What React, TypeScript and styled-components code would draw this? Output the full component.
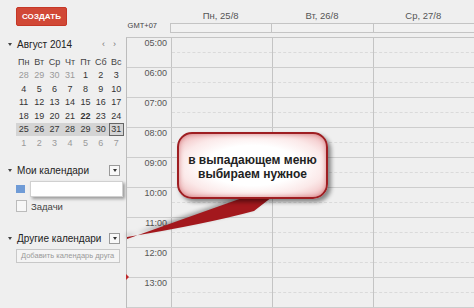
import React from "react"
import styled, { createGlobalStyle } from "styled-components"

const GlobalStyle = createGlobalStyle`
    html, body {
        margin: 0;
        padding: 0;
        background: #efefef;
    }
    body {
        font-family: "Liberation Sans", Arial, sans-serif;
        color: #333;
    }
`

const Page = styled.div`
    position: relative;
    display: flex;
    width: 474px;
    height: 308px;
    overflow: hidden;
    background: #efefef;
`

const Sidebar = styled.aside`
    flex: none;
    width: 126px;
    padding-top: 7px;
    box-sizing: border-box;
    display: flex;
    flex-direction: column;
`

const CreateButton = styled.button`
    margin-left: 16px;
    width: 51px;
    height: 19px;
    padding: 0;
    border: 1px solid #c53727;
    border-radius: 2px;
    background: #d14836;
    color: #fff;
    font-family: "Liberation Sans", Arial, sans-serif;
    font-weight: 700;
    font-size: 8px;
    letter-spacing: 0.1px;
`

const SectionHeader = styled.div<{ $mt: number }>`
    display: flex;
    align-items: center;
    height: 14px;
    margin-top: ${({ $mt }) => $mt}px;
    padding: 0 6px 0 6px;
    font-size: 10px;
    color: #222;
`

const Caret = styled.span`
    width: 0;
    height: 0;
    margin: 0 5px 0 2px;
    border-left: 2.5px solid transparent;
    border-right: 2.5px solid transparent;
    border-top: 3px solid #444;
`

const NavArrows = styled.span`
    margin-left: auto;
    margin-right: 4px;
    display: flex;
    gap: 8px;
    font-size: 9px;
    color: #777;
`

const MenuToggle = styled.span`
    margin-left: auto;
    width: 9px;
    height: 9px;
    border: 1px solid #9a9a9a;
    background: #f8f8f8;
    display: flex;
    align-items: center;
    justify-content: center;
    &::after {
        content: "";
        border-left: 2.5px solid transparent;
        border-right: 2.5px solid transparent;
        border-top: 3px solid #333;
    }
`

const MiniGrid = styled.div`
    margin: 4px 0 0 16px;
    width: 108px;
    display: grid;
    grid-template-columns: repeat(7, 1fr);
    grid-auto-rows: 13.5px;
    font-size: 9px;
`

const DayCell = styled.span<{ $muted?: boolean; $band?: boolean; $bold?: boolean; $boxed?: boolean }>`
    display: flex;
    align-items: center;
    justify-content: center;
    color: ${({ $muted }) => ($muted ? "#9a9a9a" : "#333")};
    font-weight: ${({ $bold }) => ($bold ? 700 : 400)};
    background: ${({ $band }) => ($band ? "#d4d4d4" : "transparent")};
    box-sizing: border-box;
    border: ${({ $boxed }) => ($boxed ? "1px solid #666" : "none")};
`

const WeekdayCell = styled(DayCell)`
    color: #444;
`

const CalendarRow = styled.div<{ $mt: number; $h: number }>`
    position: relative;
    display: flex;
    align-items: center;
    height: ${({ $h }) => $h}px;
    margin-top: ${({ $mt }) => $mt}px;
    padding-left: 16px;
    font-size: 9.5px;
    color: #444;
`

const ColorSwatch = styled.span`
    width: 9px;
    height: 8px;
    background: #6f9bd6;
`

const CheckBox = styled.span`
    width: 9px;
    height: 10px;
    margin-right: 4px;
    border: 1px solid #bbb;
    background: #f7f7f7;
`

const PopupMenu = styled.div`
    position: absolute;
    left: 30px;
    top: 0;
    width: 93px;
    height: 16px;
    box-sizing: border-box;
    background: #fff;
    border: 1px solid #d0d0d0;
    box-shadow: 2px 2px 3px rgba(0, 0, 0, 0.35);
`

const AddInput = styled.div`
    margin: 3px 0 0 16px;
    width: 104px;
    height: 14px;
    box-sizing: border-box;
    border: 1px solid #c8c8c8;
    background: #f4f4f4;
    padding-left: 4px;
    font-size: 7.5px;
    line-height: 12px;
    color: #9a9a9a;
    white-space: nowrap;
    overflow: hidden;
`

const Main = styled.main`
    position: relative;
    flex: 1;
    display: flex;
    flex-direction: column;
`

const ColumnRow = styled.div`
    display: grid;
    grid-template-columns: 44px repeat(3, 1fr);
`

const DayHeaderRow = styled(ColumnRow)`
    height: 23px;
    padding-top: 7px;
    box-sizing: border-box;
    font-size: 9.5px;
    color: #555;
`

const DayTitle = styled.div`
    display: flex;
    align-items: center;
    justify-content: center;
`

const AllDayRow = styled(ColumnRow)`
    height: 10px;
`

const ZoneLabel = styled.div`
    font-size: 7.5px;
    color: #444;
    text-align: right;
    padding-right: 13px;
    line-height: 6px;
`

const AllDayCell = styled.div<{ $first?: boolean }>`
    border-top: 1px solid #c4c4c4;
    border-bottom: 1px solid #c4c4c4;
    border-left: 1px solid #c4c4c4;
    background: #f1f1f1;
`

const TimeGrid = styled.div`
    margin-top: 4px;
    border-top: 1px solid #c4c4c4;
    border-left: 1px solid #bcbcbc;
`

const HourRow = styled(ColumnRow)`
    height: 30px;
    box-sizing: border-box;
    border-bottom: 1px solid #cdcdcd;
`

const HourLabel = styled.div`
    font-size: 9px;
    line-height: 10px;
    color: #555;
    text-align: right;
    padding-right: 4px;
`

const SlotCell = styled.div`
    position: relative;
    border-left: 1px solid #c4c4c4;
    &::after {
        content: "";
        position: absolute;
        left: 0;
        right: 0;
        top: 14px;
        border-top: 1px dashed #dadada;
    }
`

const NowMarker = styled.span`
    position: absolute;
    left: 0;
    top: 274px;
    width: 0;
    height: 0;
    border-top: 3px solid transparent;
    border-bottom: 3px solid transparent;
    border-left: 3px solid #c0282a;
`

const Callout = styled.div`
    position: absolute;
    left: 51px;
    top: 132px;
    width: 151px;
    height: 67px;
    box-sizing: border-box;
    border: 2px solid #9e1e22;
    border-radius: 15px;
    background: radial-gradient(ellipse at center, #ffffff 45%, #fbe9e9 70%, #eeb3b5 100%);
    box-shadow: 3px 3px 4px rgba(0, 0, 0, 0.45), inset 0 0 5px rgba(180, 40, 45, 0.5);
    display: flex;
    align-items: center;
    justify-content: center;
    text-align: center;
    font-weight: 700;
    font-size: 12px;
    line-height: 14px;
    color: #222;
    padding-top: 2px;
`

const Tail = styled.svg`
    position: absolute;
    left: 0;
    top: 0;
    width: 348px;
    height: 308px;
    pointer-events: none;
    filter: drop-shadow(-1px -2px 2px rgba(0, 0, 0, 0.35));
`

const weekdays = ["Пн", "Вт", "Ср", "Чт", "Пт", "Сб", "Вс"]

const weeks: number[][] = [
    [28, 29, 30, 31, 1, 2, 3],
    [4, 5, 6, 7, 8, 9, 10],
    [11, 12, 13, 14, 15, 16, 17],
    [18, 19, 20, 21, 22, 23, 24],
    [25, 26, 27, 28, 29, 30, 31],
    [1, 2, 3, 4, 5, 6, 7],
]

const days = ["Пн, 25/8", "Вт, 26/8", "Ср, 27/8"]
const hours = ["05:00", "06:00", "07:00", "08:00", "09:00", "10:00", "11:00", "12:00", "13:00"]

export default function App() {
    return (
        <Page>
            <GlobalStyle />
            <Sidebar>
                <CreateButton>СОЗДАТЬ</CreateButton>
                <SectionHeader $mt={11}>
                    <Caret />
                    Август 2014
                    <NavArrows>
                        <span>‹</span>
                        <span>›</span>
                    </NavArrows>
                </SectionHeader>
                <MiniGrid>
                    {weekdays.map((d) => (
                        <WeekdayCell key={d}>{d}</WeekdayCell>
                    ))}
                    {weeks.map((week, wi) =>
                        week.map((n, di) => (
                            <DayCell
                                key={`${wi}-${di}`}
                                $muted={(wi === 0 && n > 20) || wi === 5}
                                $band={wi === 4}
                                $bold={wi === 3 && n === 22}
                                $boxed={wi === 4 && n === 31}
                            >
                                {n}
                            </DayCell>
                        ))
                    )}
                </MiniGrid>
                <SectionHeader $mt={14}>
                    <Caret />
                    Мои календари
                    <MenuToggle />
                </SectionHeader>
                <CalendarRow $mt={3} $h={16}>
                    <ColorSwatch />
                    <PopupMenu />
                </CalendarRow>
                <CalendarRow $mt={3} $h={13}>
                    <CheckBox />
                    Задачи
                </CalendarRow>
                <SectionHeader $mt={19}>
                    <Caret />
                    Другие календари
                    <MenuToggle />
                </SectionHeader>
                <AddInput>Добавить календарь друга</AddInput>
            </Sidebar>
            <Main>
                <DayHeaderRow>
                    <span />
                    {days.map((d) => (
                        <DayTitle key={d}>{d}</DayTitle>
                    ))}
                </DayHeaderRow>
                <AllDayRow>
                    <ZoneLabel>GMT+07</ZoneLabel>
                    <AllDayCell />
                    <AllDayCell />
                    <AllDayCell />
                </AllDayRow>
                <TimeGrid>
                    {hours.map((h) => (
                        <HourRow key={h}>
                            <HourLabel>{h}</HourLabel>
                            <SlotCell />
                            <SlotCell />
                            <SlotCell />
                        </HourRow>
                    ))}
                </TimeGrid>
                <NowMarker />
                <Tail viewBox="0 0 348 308">
                    <path
                        d="M1,239 L119,197 L146,197 L128,211 Q80,224 1,237 Z"
                        fill="#a3181d"
                    />
                </Tail>
                <Callout>
                    в выпадающем меню
                    <br />
                    выбираем нужное
                </Callout>
            </Main>
        </Page>
    )
}
